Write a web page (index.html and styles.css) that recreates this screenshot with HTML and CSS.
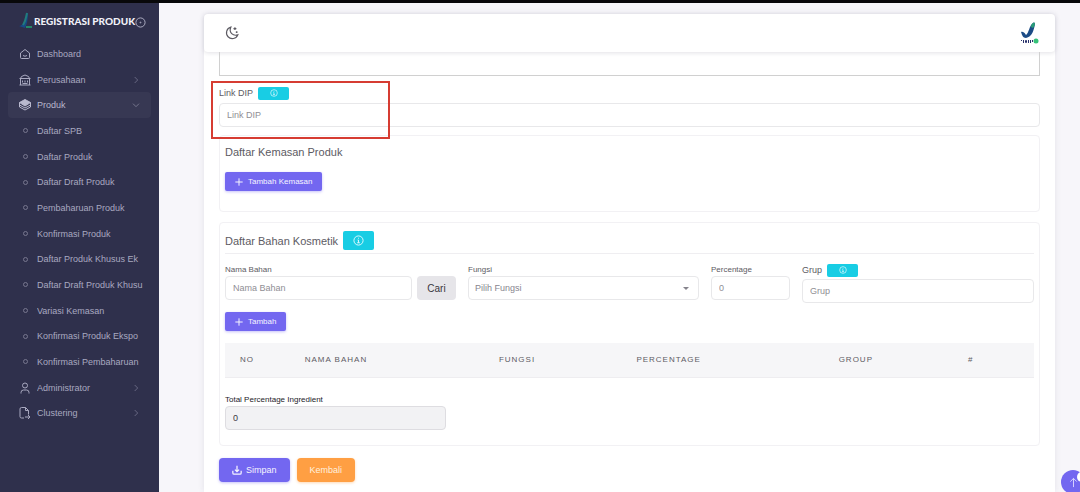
FILE: index.html
```html
<!DOCTYPE html>
<html lang="id">
<head>
<meta charset="utf-8">
<title>Registrasi Produk</title>
<link rel="stylesheet" href="styles.css">
</head>
<body>
<svg class="sprite" aria-hidden="true">
  <symbol id="chevron" viewBox="0 0 24 24"><path d="M8 3l9 9-9 9"/></symbol>
  <symbol id="info" viewBox="0 0 24 24"><circle cx="12" cy="12" r="10"/><path d="M12 6v2M10 11h2v6M9 17h6"/></symbol>
  <symbol id="plus" viewBox="0 0 24 24"><path d="M12 1v22M1 12h22"/></symbol>
</svg>
<div class="app">
  <aside class="sidebar">
    <div class="brand">
      <svg class="brand-logo" viewBox="0 0 16 18" aria-hidden="true"><path d="M1 14c4 0 6-5 8-13l1 0c0 6-1 11-3 15z" fill="#174a86"/><path d="M9 1c-1 5-2 9-4 12" stroke="#217c7d" fill="none"/><path d="M8 15h6" stroke="#258768" stroke-width="2"/></svg>
      <a class="brand-name" href="#">REGISTRASI PRODUK</a>
      <button class="pin" type="button" aria-label="Sematkan menu"><svg class="icon" viewBox="0 0 24 24"><circle cx="12" cy="12" r="10"/><circle cx="12" cy="12" r="1"/></svg></button>
    </div>
    <nav class="menu">
      <a class="item" href="#"><svg class="icon" viewBox="0 0 24 24"><path d="M3 10l9-7 9 7v9q0 2-2 2H5q-2 0-2-2zM8 15q4 3 8 0"/></svg><span class="label">Dashboard</span></a>
      <a class="item" href="#"><svg class="icon" viewBox="0 0 24 24"><path d="M1 9h22M3 9l2-4 7-3 7 3 2 4M3 9v13M21 9v13M1 22h22M7 13v4M12 13v4M17 13v4M7 19h10"/></svg><span class="label">Perusahaan</span><svg class="arrow"><use href="#chevron"/></svg></a>
      <a class="item active" href="#"><svg class="icon" viewBox="0 0 24 24"><path d="M12 1l11 6-11 7L1 7z" fill="currentColor"/><path d="M1 12l11 6 11-6M1 16l11 6 11-6M1 7v9M23 7v9"/></svg><span class="label">Produk</span><svg class="arrow open"><use href="#chevron"/></svg></a>
      <a class="item sub" href="#"><span class="dot"></span><span class="label">Daftar SPB</span></a>
      <a class="item sub" href="#"><span class="dot"></span><span class="label">Daftar Produk</span></a>
      <a class="item sub" href="#"><span class="dot"></span><span class="label">Daftar Draft Produk</span></a>
      <a class="item sub" href="#"><span class="dot"></span><span class="label">Pembaharuan Produk</span></a>
      <a class="item sub" href="#"><span class="dot"></span><span class="label">Konfirmasi Produk</span></a>
      <a class="item sub" href="#"><span class="dot"></span><span class="label">Daftar Produk Khusus Ek</span></a>
      <a class="item sub" href="#"><span class="dot"></span><span class="label">Daftar Draft Produk Khusu</span></a>
      <a class="item sub" href="#"><span class="dot"></span><span class="label">Variasi Kemasan</span></a>
      <a class="item sub" href="#"><span class="dot"></span><span class="label">Konfirmasi Produk Ekspo</span></a>
      <a class="item sub" href="#"><span class="dot"></span><span class="label">Konfirmasi Pembaharuan</span></a>
      <a class="item" href="#"><svg class="icon" viewBox="0 0 24 24"><circle cx="12" cy="7" r="5"/><path d="M4 23v-2q0-5 5-5h6q5 0 5 5v2"/></svg><span class="label">Administrator</span><svg class="arrow"><use href="#chevron"/></svg></a>
      <a class="item" href="#"><svg class="icon" viewBox="0 0 24 24"><path d="M10 22H5q-3 0-3-3V4q0-3 3-3h8l6 6v8M13 1v6h6M12 20h10M18 16l4 4-4 4"/></svg><span class="label">Clustering</span><svg class="arrow"><use href="#chevron"/></svg></a>
    </nav>
  </aside>

  <main class="page">
    <div class="sheet">
      <header class="topbar">
        <button class="theme" type="button" aria-label="Mode gelap"><svg class="icon" viewBox="0 0 24 24"><path d="M10 2a10 10 0 1 0 12 13c-8 3-16-4-12-13zM17 2v5M14.500 4.500h5M20 9v3M18.500 10.500h3"/></svg></button>
        <svg class="agency" viewBox="0 0 20 22" aria-label="BPOM" role="img"><path d="M1 10c3-1 4 2 5 3 3-2 3-9 7-12 1-1 2 0 2 1-1 6-3 13-9 14-3 0-4-3-5-6z" fill="#1c4c86"/><path d="M11 5c0-3 2-5 4-4 0 2-1 4-2 5z" fill="#2a9d78"/><path d="M1 18l1 1M3.500 18v3M5.500 18.500h1v2h-1zM8.500 18v3M10.500 18v3M12.500 18v2" stroke="#28316a" stroke-width="1" fill="none"/><circle cx="16" cy="19" r="2.500" fill="#36c278"/></svg>
      </header>
      <form class="form">
        <textarea class="notes" aria-label="Catatan"></textarea>
        <div class="link-field">
          <div class="label-row"><label class="text-md" for="dip">Link DIP</label><button class="info" type="button" aria-label="Info Link DIP"><svg><use href="#info"/></svg></button></div>
          <input class="control" id="dip" type="text" placeholder="Link DIP">
          <span class="highlight"></span>
        </div>

        <section class="panel packaging">
          <h2>Daftar Kemasan Produk</h2>
          <button class="btn small" type="button"><svg><use href="#plus"/></svg>Tambah Kemasan</button>
        </section>

        <section class="panel ingredients">
          <div class="panel-head"><h2>Daftar Bahan Kosmetik</h2><button class="info large" type="button" aria-label="Info bahan"><svg><use href="#info"/></svg></button></div>
          <div class="fields">
            <div class="search"><div class="field"><label for="nama">Nama Bahan</label><input class="control" id="nama" type="text" placeholder="Nama Bahan"></div><button class="cari" type="button">Cari</button></div>
            <div class="field"><label for="fungsi">Fungsi</label><div class="select"><select class="control" id="fungsi"><option>Pilih Fungsi</option></select></div></div>
            <div class="field"><label for="persen">Percentage</label><input class="control" id="persen" type="text" placeholder="0"></div>
            <div class="field group"><div class="label-row"><label class="text-md" for="grup">Grup</label><button class="info" type="button" aria-label="Info Grup"><svg><use href="#info"/></svg></button></div><input class="control" id="grup" type="text" placeholder="Grup"></div>
          </div>
          <button class="btn small" type="button"><svg><use href="#plus"/></svg>Tambah</button>
          <table class="table">
            <colgroup><col class="c-no"><col class="c-name"><col class="c-func"><col class="c-pct"><col class="c-group"><col class="c-act"></colgroup>
            <thead><tr><th>No</th><th>Nama Bahan</th><th>Fungsi</th><th>Percentage</th><th>Group</th><th>#</th></tr></thead>
          </table>
          <div class="field total"><label for="total">Total Percentage Ingredient</label><input class="control" id="total" type="text" value="0" readonly></div>
        </section>

        <div class="actions">
          <button class="btn" type="submit"><svg viewBox="0 0 24 24"><path d="M2 14v5q0 3 3 3h14q3 0 3-3v-5M12 2v14M7 11l5 5 5-5"/></svg>Simpan</button>
          <button class="btn warn" type="button">Kembali</button>
        </div>
      </form>
    </div>
  </main>
</div>
<button class="to-top" type="button" aria-label="Ke atas"><svg viewBox="0 0 24 24"><path d="M12 22V3M5 10l7-7 7 7"/></svg></button>
</body>
</html>
```
FILE: styles.css
```css
* { box-sizing: border-box; }
body {
  margin: 0;
  border-top: 3px solid #08080a;
  background: #f7f6fa;
  color: #5d5b63;
  font-family: "Liberation Sans", Arial, sans-serif;
  font-size: 9px;
}
button, input, select, textarea { font: inherit; margin: 0; }
button { border: 0; padding: 0; background: none; color: inherit; }
svg { fill: none; stroke: currentColor; stroke-width: 2; flex: none; }
.sprite { position: absolute; width: 0; height: 0; }
.icon { width: 12px; height: 12px; }
.app { display: flex; min-height: calc(100vh - 3px); }

/* Sidebar */
.sidebar { flex: none; width: 159px; padding: 8px; background: #2f304c; color: #a9a9c0; }
.brand { display: flex; align-items: center; height: 20px; padding-left: 10px; margin-bottom: 10px; }
.brand-logo { width: 16px; height: 18px; stroke: none; }
.brand-name { color: #f1f1f8; font: 900 10px Lato, sans-serif; text-decoration: none; white-space: nowrap; }
.pin { display: flex; color: #b6b6cb; margin-top: 3px; }
.pin .icon { width: 11px; height: 11px; }
.menu { display: flex; flex-direction: column; height: 385px; }
.item { flex: 1; display: flex; align-items: center; gap: 6px; padding: 0 11px; border-radius: 4px; color: inherit; text-decoration: none; line-height: 14px; }
.item.sub { padding-right: 5px; }
.item.active { background: #373853; color: #b9b9ce; }
.label { flex: 1; overflow: hidden; white-space: nowrap; }
.dot { width: 5px; height: 5px; margin: 0 3px 0 4px; border: 1px solid #77778f; border-radius: 50%; }
.arrow { width: 8px; height: 8px; opacity: .7; }
.arrow.open { transform: rotate(90deg); }

/* Page sheet */
.page { flex: 1; min-width: 0; padding: 11px 25px 0 45px; display: flex; }
.sheet { flex: 1; min-width: 0; background: #fff; border-radius: 4px 4px 0 0; box-shadow: 0 0 6px rgba(50, 45, 80, .1); }
.topbar { display: flex; align-items: center; justify-content: space-between; height: 38px; padding: 0 15px 0 21px; border-radius: 4px; box-shadow: 0 1px 4px rgba(50, 45, 80, .14); }
.theme { display: flex; }
.theme .icon { width: 14px; height: 14px; }
.agency { width: 20px; height: 22px; stroke: none; }
.form { padding: 0 15px 10px; }
.notes { display: block; width: 100%; height: 24px; border: 1px solid #d0d0d0; border-top: 0; resize: none; background: none; }

/* Fields */
.link-field { position: relative; padding-top: 11px; }
.highlight { position: absolute; left: -8px; top: 5px; width: 179px; height: 58px; border: 2px solid #d63c32; pointer-events: none; }
.label-row { display: flex; align-items: center; gap: 5px; height: 12px; }
.text-md { font-size: 9px; }
.info { display: flex; align-items: center; justify-content: center; width: 31px; height: 13px; border-radius: 2px; background: #18cde4; color: #e9fcff; }
.info svg { width: 8px; height: 8px; }
.info.large { height: 19px; }
.info.large svg { width: 11px; height: 11px; }
.control { display: block; width: 100%; height: 24px; padding: 0 7px; border: 1px solid #e8e8ea; border-radius: 4px; background: #fff; color: #87858f; font-size: 9px; }
.control::placeholder { color: #8f8e94; opacity: 1; }
.link-field .control { margin-top: 4px; }
.field { min-width: 0; flex: 1; }
.field > label { display: block; height: 12px; line-height: 11px; font-size: 8px; white-space: nowrap; }

/* Panels */
.panel { padding: 0 5px; border: 1px solid #f2f1f4; border-radius: 4px; }
.packaging { margin-top: 8px; padding-top: 8px; padding-bottom: 20px; }
h2 { margin: 0; font-size: 11px; font-weight: 400; line-height: 16px; }
.packaging .btn { margin-top: 12px; }
.ingredients { margin-top: 10px; padding-bottom: 15px; }
.panel-head { display: flex; align-items: center; gap: 5px; padding: 8px 0 3px; border-bottom: 1px solid #efeef1; }
.fields { display: grid; grid-template-columns: 231fr 231fr 79fr 232fr; gap: 12px; padding: 10px 0 9px; }
.search { display: flex; gap: 5px; align-items: start; }
.cari { width: 39px; height: 24px; margin-top: 12px; border-radius: 4px; background: #e6e5e9; color: #38363e; font-size: 10px; }
.select { position: relative; }
.select select { appearance: none; padding: 0 6px; }
.select::after { content: ""; position: absolute; right: 10px; top: 11px; border: 3px solid transparent; border-top-color: #85838c; border-bottom: 0; }
.group .control { margin-top: 3px; }
.btn { display: inline-flex; align-items: center; justify-content: center; gap: 4px; height: 24px; padding: 0 13px; border-radius: 4px; background: #7367f0; color: #f5f4ff; font-size: 9px; box-shadow: 0 1px 3px rgba(115, 103, 240, .4); white-space: nowrap; }
.btn svg { width: 10px; height: 10px; stroke-width: 3; }
.btn.small { height: 19px; padding: 0 10px; border-radius: 2px; font-size: 8px; gap: 5px; }
.btn.small svg { width: 8px; height: 8px; }
.btn.warn { background: #ff9f43; color: #fff1df; box-shadow: 0 1px 3px rgba(255, 159, 67, .4); }
.table { width: 100%; margin-top: 12px; table-layout: fixed; border-collapse: collapse; }
th { height: 34px; padding: 0 0 0 15px; background: #f6f6f8; border-bottom: 1px solid #eeedf0; font-size: 8px; font-weight: 400; letter-spacing: 1px; text-align: left; text-transform: uppercase; }
.c-no { width: 8%; }
.c-name { width: 24%; }
.c-func { width: 17%; }
.c-pct { width: 25%; }
.c-group { width: 16%; }
.c-act { width: 10%; }
.total { max-width: 221px; margin-top: 16px; color: #232228; }
.total .control { background: #f2f2f4; border-color: #dedde1; color: #3c3a42; }
.actions { display: flex; gap: 7px; margin-top: 12px; }

.to-top { position: fixed; right: -5px; bottom: -2px; display: flex; align-items: center; justify-content: center; width: 24px; height: 24px; border-radius: 50%; background: #7367f0; color: #dedbff; }
.to-top svg { width: 11px; height: 11px; }
.to-top::after { content: ""; position: absolute; right: -1px; top: 2px; width: 9px; height: 10px; border-radius: 50%; background: #fff; }
```
